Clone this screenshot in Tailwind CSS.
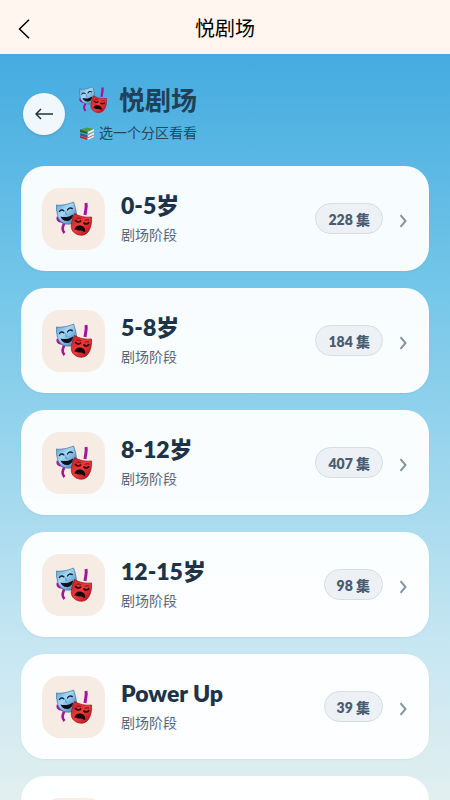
<!DOCTYPE html>
<html lang="zh-CN">
<head>
  <meta charset="UTF-8">
  <meta name="viewport" content="width=device-width, initial-scale=1.0">
  <title>悦剧场</title>
  <script src="https://cdn.jsdelivr.net/npm/@tailwindcss/browser@4"></script>
</head>
<body class="flex flex-col h-screen overflow-hidden font-['Lato','Noto_Sans_CJK_SC',sans-serif] text-[#1e3347]">

  <!-- shared icons -->
  <svg class="absolute w-0 h-0" aria-hidden="true">
    <defs>
      <linearGradient id="blue-face" x1="0" y1="0" x2="1" y2="1">
        <stop offset="0" stop-color="#5c9bd0"/>
        <stop offset=".4" stop-color="#a4d8f6"/>
        <stop offset="1" stop-color="#3878b4"/>
      </linearGradient>
      <linearGradient id="red-face" x1="0" y1="0" x2="1" y2="1">
        <stop offset="0" stop-color="#c91f2b"/>
        <stop offset=".5" stop-color="#ee3a3a"/>
        <stop offset="1" stop-color="#a80f1c"/>
      </linearGradient>
    </defs>
    <symbol id="masks" viewBox="0 0 36 36">
      <path d="M30 2c1 4-.5 7-1 12" fill="none" stroke="#a3149b" stroke-width="3"/>
      <path d="M2 16c-1 3 1 4 4 4.500c3 .5 2 2.500 1 5c-.8 2.500-.5 4.500 1.500 6.500" fill="none" stroke="#a3149b" stroke-width="2.600"/>
      <path d="M.4 4C4 4.800 12 3.600 17.500 1c1.300 3 2.600 8 3 12.500c.4 5.500-2.500 9-6.500 9.500C7.500 24 3 20.500 1.600 14.500C.7 10.500.2 7 .4 4z" fill="url(#blue-face)" stroke="#3a6f9f" stroke-width=".7"/>
      <path d="M3.500 10.500c1-1.800 3-2 4.500-.6M11.500 9c1-2 3-2.600 4.800-1.400" fill="none" stroke="#10202e" stroke-width="1.300" stroke-linecap="round"/>
      <path d="M9.600 10.500l.4 3 1.300-.4" fill="none" stroke="#4a83b3" stroke-width=".8"/>
      <path d="M4.500 15.500c4 1.300 9 .4 12.500-2c0 3.500-2 6-5.200 6.400c-3.500.4-6.300-1.400-7.300-4.400z" fill="#0c1218"/>
      <path d="M18.500 12.500c5 3 11 4.300 17 3.500c.4 5-.5 11-3.500 15c-3 4-8.500 4-12.500 1.600c-4-2.600-5-6.600-3.800-11.100c.7-3.200 1.600-6.500 2.800-9z" fill="url(#red-face)" stroke="#8e111b" stroke-width=".7"/>
      <path d="M19.500 19.500c1.600 1.800 3.500 2 5 .6M28 22c1.600 1.400 3.500 1.300 4.600-.2" fill="none" stroke="#220709" stroke-width="1.700" stroke-linecap="round"/>
      <path d="M20.500 17.500c1.500-.8 3-.6 4.400.4M28.500 19.500c1.400-.8 3-.9 4.500-.3" fill="none" stroke="#6f0c14" stroke-width=".9"/>
      <path d="M18.500 29c.5-3.500 3-5 6-4.400c3 .5 5 2.500 4.800 6c-1.200.9-1.800-.7-3.300-.9c-2-.6-3.500.5-4.800-.6c-1-.8-1.700-.8-2.700-.1z" fill="#14080a"/>
    </symbol>
    <symbol id="books" viewBox="0 0 16 13">
      <path d="M1 9l6.500-2L15 8.500l-6.500 3z" fill="#e3545a"/>
      <path d="M1 9l7.500 2.500V13L1 10.800z" fill="#b3232e"/>
      <path d="M8.500 11.500L15 8.500v1.400L8.500 13z" fill="#f1ede2"/>
      <path d="M1.500 6l6-2L15 5.500 8.500 8.500z" fill="#5badd8"/>
      <path d="M8.500 8.500l6.500-3v2l-6.500 3z" fill="#f1ede2"/>
      <path d="M1.500 6l7 2.500v2L1 8.500z" fill="#245f8e"/>
      <path d="M1 2.500L8 .5l7 1.500-6.500 3z" fill="#4f9a48"/>
      <path d="M8.500 5L15 2v2L8.500 7z" fill="#f1ede2"/>
      <path d="M1 2.500L8.500 5v2L1 5z" fill="#23602c"/>
    </symbol>
    <symbol id="chevron" viewBox="0 0 8 14">
      <path d="M1.500 1.200L6.500 7l-5 5.800" fill="none" stroke="currentColor" stroke-width="2"/>
    </symbol>
  </svg>

  <header class="relative flex shrink-0 items-center justify-center h-[54px] bg-[#fff7ef] text-black">
    <button class="absolute left-3 flex items-center justify-center w-6 h-10 pt-1" aria-label="返回">
      <svg class="w-3 h-5" viewBox="0 0 12 20" fill="none" stroke="currentColor" stroke-width="1.500">
        <path d="M11 .8L1.500 10l9.500 9.200"/>
      </svg>
    </button>
    <h1 class="pt-0.5 text-xl">悦剧场</h1>
  </header>

  <main class="flex-1 overflow-y-auto [scrollbar-width:none] px-[21px] pt-7 bg-[linear-gradient(to_bottom,#45abe0,#73c6e8_31%,#c6e6f2_79%,#e2efef)]">

    <!-- page title -->
    <div class="flex items-center gap-3.5 h-16 px-0.5">
      <button class="flex shrink-0 items-center justify-center w-[42px] h-[42px] rounded-full bg-[#f1f8fd] shadow-sm" aria-label="返回上一页">
        <svg class="w-[18px] h-3" viewBox="0 0 18 12" fill="none" stroke="currentColor" stroke-width="1.500">
          <path d="M18 6H1M6 1L1 6l5 5"/>
        </svg>
      </button>
      <div>
        <h2 class="flex items-center gap-3 h-9 text-[26px] font-bold text-[#21405a]">
          <svg class="w-7 h-7" aria-hidden="true"><use href="#masks"/></svg>
          悦剧场
        </h2>
        <p class="flex items-center gap-1 h-7 pt-0.5 text-sm text-[#234860]">
          <svg class="w-4 h-[13px]" aria-hidden="true"><use href="#books"/></svg>
          选一个分区看看
        </p>
      </div>
    </div>

    <!-- stages -->
    <div id="stages" class="flex flex-col gap-[17px] pt-5 pb-6">
      <!-- placeholder for the next stage -->
      <div id="next-stage" class="flex shrink-0 items-center h-[105px] px-5 rounded-3xl border border-white/60 bg-white/95 shadow-xs">
        <div class="w-[63px] h-[62px] rounded-[18px] bg-[#f9ede3]"></div>
      </div>
    </div>
  </main>

  <template id="stage-card">
    <a href="#" class="flex shrink-0 items-center h-[105px] px-5 rounded-3xl border border-white/60 bg-white/95 shadow-xs">
      <div class="flex shrink-0 items-center justify-center w-[63px] h-[62px] rounded-[18px] bg-[#f7ece3]">
        <svg class="w-9 h-9" aria-hidden="true"><use href="#masks"/></svg>
      </div>
      <div class="flex-1 pl-4">
        <h3 class="text-[23px] leading-8 font-extrabold"></h3>
        <p class="text-sm leading-7 text-[#53677d]">剧场阶段</p>
      </div>
      <span class="count h-[31px] px-3 rounded-full border border-[#d6dde3] bg-[#edf1f5] text-sm leading-[31px] font-extrabold text-[#485c72]"></span>
      <svg class="w-2 h-3.5 mt-1 ml-4 text-[#8393a5]" aria-hidden="true"><use href="#chevron"/></svg>
      <span class="w-px"></span>
    </a>
  </template>

  <script>
    const stages = [
      ["0-5岁", 228],
      ["5-8岁", 184],
      ["8-12岁", 407],
      ["12-15岁", 98],
      ["Power Up", 39],
    ]
    const next = document.querySelector("#next-stage")
    const template = document.querySelector("#stage-card")
    stages.forEach(([name, count]) => {
      const card = template.content.cloneNode(true)
      card.querySelector("h3").textContent = name
      card.querySelector(".count").textContent = `${count} 集`
      next.before(card)
    })
  </script>
</body>
</html>
